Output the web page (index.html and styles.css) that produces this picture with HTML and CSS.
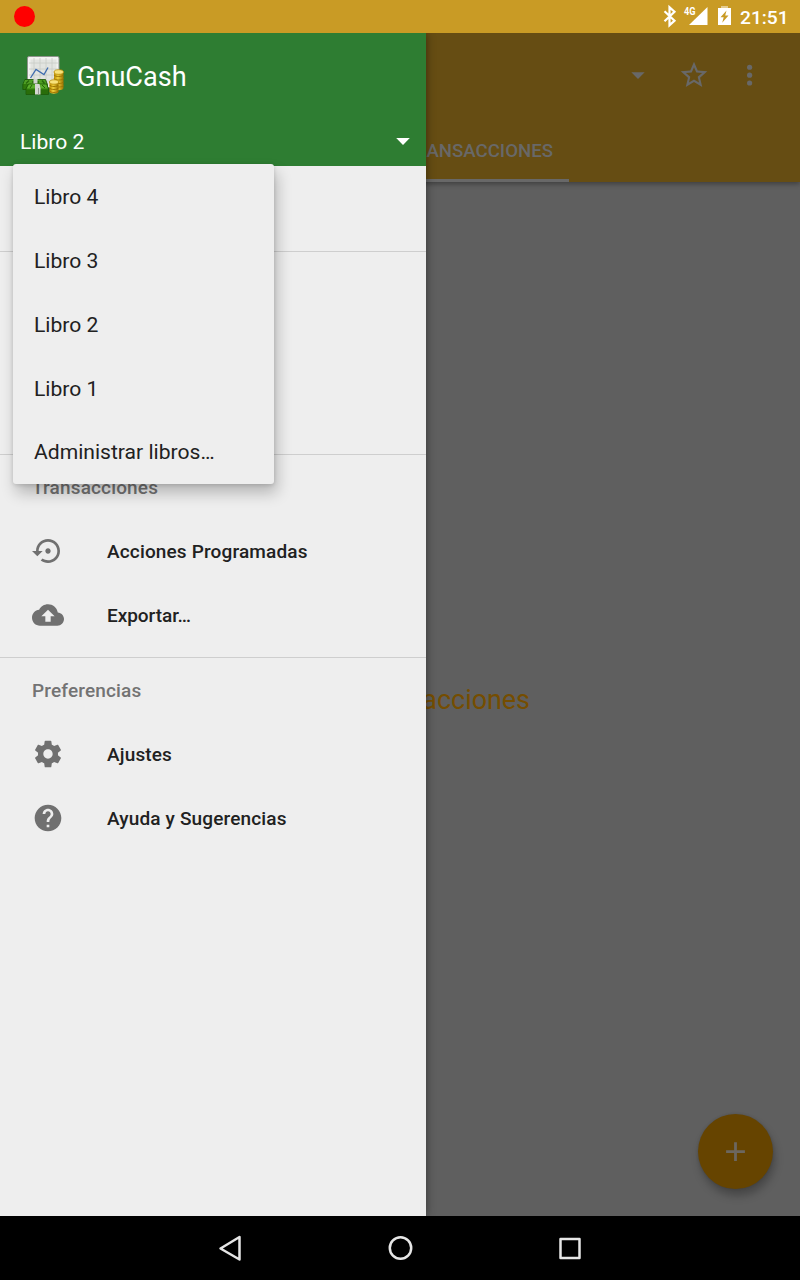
FILE: index.html
```html
<!DOCTYPE html>
<html lang="es">
<head>
<meta charset="utf-8">
<title>GnuCash</title>
<link rel="stylesheet" href="styles.css">
</head>
<body>
<div class="screen">
  <header class="status">
    <span class="record"></span>
    <svg class="status-icons" width="80" height="33" viewBox="660 0 80 33">
      <path d="M664.5 11.300l10 9.500-5 4.400V7.300l5 4.400-10 9.500" fill="none" stroke="#fff" stroke-width="2.200"/>
      <path d="M707.500 7v18h-18.500z" fill="#fff"/>
      <text class="network" x="684" y="15.200" textLength="11.500" lengthAdjust="spacingAndGlyphs">4G</text>
      <path fill="#fff" fill-opacity=".5" d="M721 6h7v2h-7z"/>
      <path fill="#fff" fill-rule="evenodd" d="M718 8h13v17h-13zM726.500 10.500l-6 6.800h3.200l-1.500 5.500 6.300-7.300h-3.300z"/>
    </svg>
    <span class="clock">21:51</span>
  </header>
  <main class="app">
    <div class="appbar">
      <div class="actions">
        <svg width="32" height="32" viewBox="0 0 24 24"><path d="M7 10l5 5 5-5z"/></svg>
        <svg width="32" height="32" viewBox="0 0 24 24"><path d="M22 9.240l-7.190-.62L12 2 9.190 8.630 2 9.240l5.460 4.730L5.820 21 12 17.270 18.180 21l-1.630-7.030L22 9.240zM12 15.400l-3.760 2.270 1-4.280-3.320-2.880 4.380-.38L12 6.100l1.710 4.040 4.380.38-3.320 2.880 1 4.280L12 15.400z"/></svg>
        <svg width="32" height="32" viewBox="0 0 24 24"><circle cx="11.700" cy="6.200" r="1.950"/><circle cx="11.700" cy="12.100" r="1.950"/><circle cx="11.700" cy="18" r="1.950"/></svg>
      </div>
      <div class="tab">TRANSACCIONES</div>
    </div>
    <p class="empty">transacciones</p>
    <div class="fab"><svg width="20" height="20" viewBox="0 0 20 20"><path d="M9.500 .2v18.800M.1 9.600h18.800"/></svg></div>

    <aside class="drawer">
      <div class="drawer-head">
        <div class="brand">
          <svg width="43" height="43" viewBox="0 0 43 43">
            <defs>
              <linearGradient id="gold"><stop stop-color="#b98900"/><stop offset=".4" stop-color="#f0cf3c"/><stop offset="1" stop-color="#9b7200"/></linearGradient>
            </defs>
            <rect x="5.500" y="2.500" width="31.500" height="31" rx="1.500" fill="#f2f3f1" stroke="#8f938d"/>
            <rect x="8.500" y="5.500" width="26" height="25" fill="#e2e4e0"/>
            <path d="M12 4v27M18 4v27M24 4v27M30 4v27M7 9h29M7 15h29M7 21h29M7 27h29" stroke="#c9ccc7" stroke-width=".8"/>
            <path d="M8.500 24l5.500-8.500 8 5 4-7" fill="none" stroke="#3f6cae" stroke-width="1.300"/>
            <g>
              <path d="M32 18v16c0 3 9.500 3 9.500 0V18z" fill="url(#gold)"/>
              <path d="M32 21c1 2 8.500 2 9.500 0M32 24.500c1 2 8.500 2 9.500 0M32 28c1 2 8.500 2 9.500 0M32 31.500c1 2 8.500 2 9.500 0" fill="none" stroke="#9b7000" stroke-width=".9"/>
              <ellipse cx="36.750" cy="18" rx="4.700" ry="2.300" fill="#f8e27a" stroke="#b88c08" stroke-width=".8"/>
              <path d="M27.500 28v9.500c0 3 9 3 9 0V28z" fill="url(#gold)"/>
              <path d="M27.500 31c1 2 8 2 9 0M27.500 34c1 2 8 2 9 0M27.500 37c1 2 8 2 9 0" fill="none" stroke="#9b7000" stroke-width=".9"/>
              <ellipse cx="32" cy="28" rx="4.500" ry="2.200" fill="#f8e27a" stroke="#b88c08" stroke-width=".8"/>
            </g>
            <path d="M3 25.500h20.500l2 5v5H.8v-5z" fill="#2f790b" stroke="#1c5707" stroke-width=".8"/>
            <path d="M3 26h20l1.500 4H1.500z" fill="#4f9f24"/>
            <path d="M7 26.500l-3 3M20 26.500l2.500 3M10 28h7" stroke="#28680d" stroke-width="1.400"/>
            <path d="M11.500 25h4v5h-4z" fill="#cfd2cb"/>
            <path d="M6.500 30h18l2 4.500v6H4v-6z" fill="#2f7a0b" stroke="#1c5707" stroke-width=".8"/>
            <path d="M6.800 30.500h17.500l1.500 4H4.800z" fill="#5aad2c"/>
            <path d="M8 34l2-3M20 31l3 3M4.500 37h22M4.500 39h22" stroke="#25610a"/>
            <path d="M13 30h4.500l1 4.500v6h-5.500v-6z" fill="#d5d7d2"/>
            <path d="M16.500 34v6.500" stroke="#969a93"/>
          </svg>
          <span>GnuCash</span>
        </div>
        <div class="spinner"><span>Libro 2</span><svg width="14" height="7" viewBox="0 0 14 7"><path d="M.2 0h13.600L7 6.900z" fill="#fff"/></svg></div>
      </div>
      <div class="group group-first"></div>
      <div class="group group-accounts"></div>
      <div class="group">
        <h2>Transacciones</h2>
        <div class="item"><svg width="32" height="32" viewBox="0 0 24 24"><path d="M14 12c0-1.100-.9-2-2-2s-2 .9-2 2 .9 2 2 2 2-.9 2-2zm-2-9c-4.970 0-9 4.030-9 9H0l4 4 4-4H5c0-3.870 3.130-7 7-7s7 3.130 7 7-3.130 7-7 7c-1.510 0-2.910-.49-4.060-1.300l-1.420 1.440C8.040 20.300 9.940 21 12 21c4.970 0 9-4.030 9-9s-4.030-9-9-9z"/></svg><span>Acciones Programadas</span></div>
        <div class="item"><svg width="32" height="32" viewBox="0 0 24 24"><path d="M19.350 10.040C18.670 6.590 15.640 4 12 4 9.110 4 6.600 5.640 5.350 8.040 2.340 8.360 0 10.910 0 14c0 3.310 2.690 6 6 6h13c2.760 0 5-2.240 5-5 0-2.640-2.050-4.780-4.650-4.960zM14 13v4h-4v-4H7l5-5 5 5h-3z"/></svg><span class="tight">Exportar…</span></div>
      </div>
      <div class="group group-last">
        <h2>Preferencias</h2>
        <div class="item"><svg width="32" height="32" viewBox="0 0 24 24"><path d="M19.430 12.980c.04-.32.07-.64.07-.98s-.03-.66-.07-.98l2.110-1.650c.19-.15.24-.42.12-.64l-2-3.460c-.12-.22-.39-.3-.61-.22l-2.490 1c-.52-.4-1.080-.73-1.690-.98l-.38-2.650C14.460 2.180 14.250 2 14 2h-4c-.25 0-.46.18-.49.42l-.38 2.650c-.61.25-1.170.59-1.690.98l-2.490-1c-.23-.09-.49 0-.61.22l-2 3.460c-.13.22-.07.49.12.64l2.110 1.650c-.04.32-.07.65-.07.98s.03.66.07.98l-2.110 1.650c-.19.15-.24.42-.12.64l2 3.460c.12.22.39.3.61.22l2.490-1c.52.4 1.080.73 1.690.98l.38 2.650c.03.24.24.42.49.42h4c.25 0 .46-.18.49-.42l.38-2.650c.61-.25 1.170-.59 1.690-.98l2.490 1c.23.09.49 0 .61-.22l2-3.460c.12-.22.07-.49-.12-.64l-2.110-1.650zM12 15.500c-1.930 0-3.500-1.570-3.500-3.500s1.570-3.500 3.500-3.500 3.500 1.570 3.500 3.500-1.570 3.500-3.500 3.500z"/></svg><span>Ajustes</span></div>
        <div class="item"><svg width="32" height="32" viewBox="0 0 24 24"><path d="M12 2C6.480 2 2 6.480 2 12s4.480 10 10 10 10-4.480 10-10S17.520 2 12 2zm1 17h-2v-2h2v2zm2.070-7.750l-.9.920C13.450 12.900 13 13.500 13 15h-2v-.5c0-1.100.45-2.100 1.170-2.830l1.240-1.260c.37-.36.59-.86.59-1.410 0-1.100-.9-2-2-2s-2 .9-2 2H8c0-2.210 1.790-4 4-4s4 1.790 4 4c0 .88-.36 1.680-.93 2.250z"/></svg><span>Ayuda y Sugerencias</span></div>
      </div>
    </aside>

    <ul class="menu">
      <li>Libro 4</li>
      <li>Libro 3</li>
      <li>Libro 2</li>
      <li>Libro 1</li>
      <li>Administrar libros…</li>
    </ul>
  </main>
  <nav class="navbar">
    <svg width="32" height="32" viewBox="0 0 32 32"><path d="M25.500 5v22.500L6.500 16.500z"/></svg>
    <svg width="32" height="32" viewBox="0 0 32 32"><circle cx="16.500" cy="16" r="10.700"/></svg>
    <svg width="32" height="32" viewBox="0 0 32 32"><rect x="6.500" y="7" width="19" height="19"/></svg>
  </nav>
</div>
</body>
</html>
```
FILE: styles.css
```css
* { box-sizing: border-box; }
body { margin: 0; font-family: Roboto, sans-serif; background: #000; }
svg { display: block; flex: none; }

.screen {
  width: 800px;
  height: 1280px;
  display: flex;
  flex-direction: column;
  overflow: hidden;
}

.status {
  height: 33px;
  flex: none;
  display: flex;
  align-items: center;
  padding: 0 11px 0 13.500px;
  background: #c99b25;
  color: #fff;
}
.record { width: 21px; height: 21px; border-radius: 50%; background: #f00; }
.status-icons { margin-left: auto; }
.network { font-size: 10px; font-weight: 700; fill: #fff; }
.clock { width: 49px; padding-top: 2px; font-size: 19.200px; font-weight: 500; line-height: 22px; }

.app {
  position: relative;
  flex: 1;
  background: #5f5f5f;
  overflow: hidden;
}
.appbar {
  height: 149px;
  display: flex;
  flex-direction: column;
  background: #664d13;
  box-shadow: 0 2px 5px rgba(0, 0, 0, .35);
}
.actions {
  height: 84px;
  display: flex;
  justify-content: flex-end;
  align-items: center;
  gap: 24px;
  padding-right: 34px;
  fill: #686868;
}
.tab {
  width: 569px;
  height: 65px;
  padding-right: 16px;
  border-bottom: 3px solid #686868;
  color: #686868;
  font-size: 18.640px;
  font-weight: 500;
  line-height: 68px;
  text-align: right;
}
.empty {
  width: 530px;
  margin: 501px 0 0;
  color: #754d00;
  font-size: 26.900px;
  line-height: 34px;
  text-align: right;
}
.fab {
  position: absolute;
  right: 27px;
  bottom: 27px;
  width: 75px;
  height: 75px;
  display: flex;
  align-items: center;
  justify-content: center;
  border-radius: 50%;
  background: #664400;
  box-shadow: 2px 7px 9px rgba(0, 0, 0, .26), 0 0 3px rgba(0, 0, 0, .15);
}
.fab path { stroke: #6c675f; stroke-width: 2.800; fill: none; }

.drawer {
  position: absolute;
  inset: 0 auto 0 0;
  width: 426px;
  background: #eee;
  box-shadow: 0 0 9px rgba(0, 0, 0, .45);
}
.drawer-head { height: 133px; background: #2e7d32; color: #fff; }
.brand {
  height: 85px;
  display: flex;
  align-items: center;
  gap: 12.500px;
  padding-left: 21.500px;
  font-size: 27.100px;
}
.brand span { padding-top: 3px; }
.spinner {
  height: 48px;
  display: flex;
  align-items: center;
  justify-content: space-between;
  padding: 0 16px 0 20px;
  font-size: 21.100px;
}
.spinner span { padding-bottom: 2px; }
.spinner svg { margin-bottom: 1px; }
.group { height: 203px; border-bottom: 1px solid #cecece; }
.group-first { height: 86px; }
.group-last { border: 0; }
.group h2 {
  height: 64px;
  margin: 0;
  padding-left: 32px;
  color: #737373;
  font-size: 19px;
  font-weight: 500;
  letter-spacing: .15px;
  line-height: 66px;
}
.item {
  height: 64px;
  display: flex;
  align-items: center;
  gap: 43px;
  padding-left: 32px;
  color: #212121;
  font-size: 19px;
  font-weight: 500;
  line-height: 22px;
  letter-spacing: .15px;
}
.item span { padding-top: 2px; }
.item .tight { letter-spacing: -.05px; }
.item svg { fill: #707070; }

.menu {
  position: absolute;
  left: 13px;
  top: 131px;
  width: 261px;
  height: 320px;
  margin: 0;
  padding: 0;
  list-style: none;
  border-radius: 3px;
  background: #eee;
  box-shadow: 3px 9px 15px rgba(0, 0, 0, .24), 0 1px 4px rgba(0, 0, 0, .14);
  color: #212121;
  font-size: 21.100px;
}
.menu li { height: 64px; padding-left: 21px; line-height: 66px; }
.menu li:last-child { line-height: 64px; }

.navbar {
  height: 64px;
  flex: none;
  display: flex;
  align-items: center;
  justify-content: center;
  gap: 138px;
  background: #000;
}
.navbar svg { fill: none; stroke: #e6e6e6; stroke-width: 2.500; stroke-linejoin: round; }
```
